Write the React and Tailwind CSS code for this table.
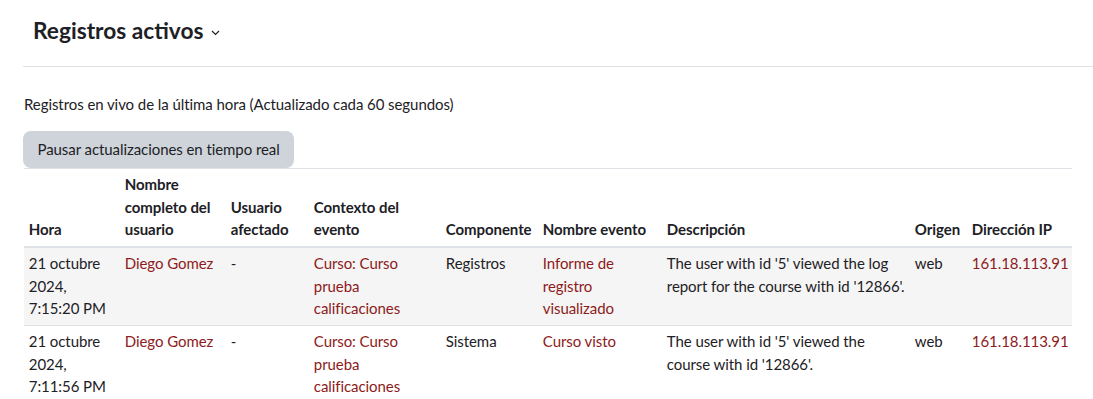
import React from "react";

const link = "text-[#8d1b20]";

function Th({ children, w }) {
  return (
    <th className="align-bottom text-left font-bold px-[4.8px] py-[4.8px] border-t border-[#dee2e6] border-b-2 border-b-[#dee2e6]" style={{ width: w }}>
      {children}
    </th>
  );
}

function Td({ children, cls = "" }) {
  return <td className={"align-top px-[4.8px] py-[4.8px] border-t border-[#dee2e6] " + cls}>{children}</td>;
}

export default function App() {
  const rows = [
    {
      hora: ["21 octubre", "2024,", "7:15:20 PM"],
      comp: "Registros",
      evento: "Informe de registro visualizado",
      desc: "The user with id '5' viewed the log report for the course with id '12866'.",
      bg: "bg-[#f5f5f5]",
    },
    {
      hora: ["21 octubre", "2024,", "7:11:56 PM"],
      comp: "Sistema",
      evento: "Curso visto",
      desc: "The user with id '5' viewed the course with id '12866'.",
      bg: "bg-white",
    },
  ];
  return (
    <div className="bg-white text-[#1d2125] text-[15px] leading-[1.5] tracking-[-0.07px]" style={{ fontFamily: "Lato, 'Noto Sans', sans-serif" }}>
      <div className="ml-[23px]">
        <div className="h-[67px] border-b border-[#dee2e6] flex items-start pt-[17px] pl-[10px]">
          <h2 className="text-[22.7px] font-bold leading-[1.2] tracking-normal flex items-center">
            Registros activos
            <svg className="ml-[8px] mt-[5px]" width="9" height="6" viewBox="0 0 9 6" fill="none">
              <path d="M1 1l3.5 3.5L8 1" stroke="#1d2125" strokeWidth="1.2" />
            </svg>
          </h2>
        </div>
      </div>
      <div className="ml-[24px] w-[1048px]">
        <p className="mt-[26px] mb-[15px]">Registros en vivo de la última hora (Actualizado cada 60 segundos)</p>
        <button className="-ml-[1px] bg-[#ced4da] rounded-[8px] h-[37px] px-[14.5px] text-[#1d2125] text-[15px]">
          Pausar actualizaciones en tiempo real
        </button>
        <table className="w-[1048px] table-fixed border-collapse mt-0">
          <thead>
            <tr>
              <Th w={96}>Hora</Th>
              <Th w={106}>Nombre completo del usuario</Th>
              <Th w={83}>Usuario afectado</Th>
              <Th w={132}>Contexto del evento</Th>
              <Th w={97}>Componente</Th>
              <Th w={124}>Nombre evento</Th>
              <Th w={248}>Descripción</Th>
              <Th w={57}>Origen</Th>
              <Th w={105}>Dirección IP</Th>
            </tr>
          </thead>
          <tbody>
            {rows.map((r, i) => (
              <tr key={i} className={r.bg}>
                <Td>
                  {r.hora[0]}
                  <br />
                  {r.hora[1]}
                  <br />
                  {r.hora[2]}
                </Td>
                <Td cls={link}>Diego Gomez</Td>
                <Td>-</Td>
                <Td cls={link}>Curso: Curso prueba calificaciones</Td>
                <Td>{r.comp}</Td>
                <Td cls={link}>{r.evento}</Td>
                <Td>{r.desc}</Td>
                <Td>web</Td>
                <Td cls={link}>161.18.113.91</Td>
              </tr>
            ))}
          </tbody>
        </table>
      </div>
    </div>
  );
}
